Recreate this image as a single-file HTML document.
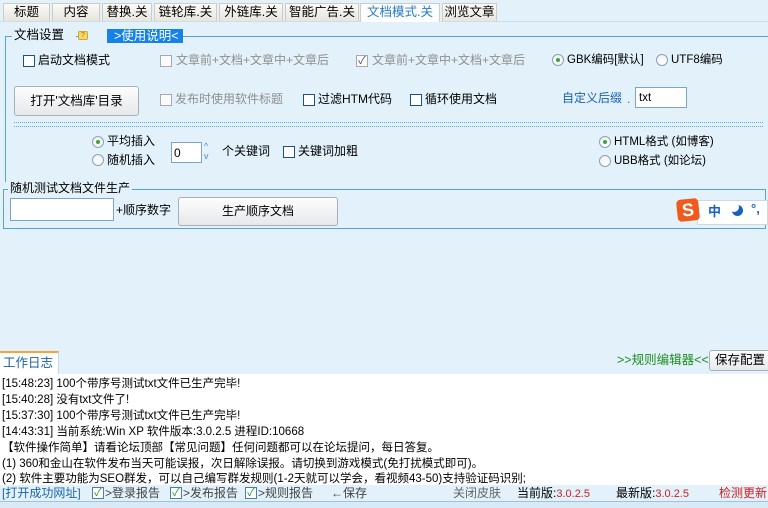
<!DOCTYPE html>
<html><head><meta charset="utf-8"><style>
*{margin:0;padding:0;box-sizing:border-box}
body{width:768px;height:508px;overflow:hidden;background:#e2f1fa;font-family:"Liberation Sans","Noto Sans CJK SC",sans-serif;font-size:12px;color:#000;position:relative}
.a{position:absolute;white-space:nowrap;line-height:14px}
.tab{position:absolute;top:3px;height:18px;background:linear-gradient(#fafaf7,#e7e5dd);border:1px solid #cfcdc3;border-bottom:none;text-align:center;line-height:17px;font-size:12.5px}
.cb{position:absolute;width:12px;height:12px;border:1px solid #1c5180;background:#fff}
.cb.g{border-color:#a9a9a9;background:#fafafa}
.rd{position:absolute;width:12px;height:12px;border:1px solid #8aa0b8;border-radius:50%;background:linear-gradient(#f2f2f2,#fff)}
.rd.on::after{content:"";position:absolute;left:3px;top:3px;width:4px;height:4px;border-radius:50%;background:#3aa537}
.btn{position:absolute;border:1px solid #a7b0b7;border-radius:3px;background:linear-gradient(#fdfdfd,#e6e8ea);text-align:center}
.gray{color:#8f8f8f}
.inp{position:absolute;background:#fff;border:1px solid #7aa4c8}
</style></head><body>
<div style="position:absolute;left:0;top:21px;width:768px;height:1px;background:#c9dfe9"></div>
<div class="tab" style="left:3px;width:47px">标题</div>
<div class="tab" style="left:52px;width:48px">内容</div>
<div class="tab" style="left:102px;width:50px">替换.关</div>
<div class="tab" style="left:154px;width:63px">链轮库.关</div>
<div class="tab" style="left:219px;width:64px">外链库.关</div>
<div class="tab" style="left:285px;width:74px">智能广告.关</div>
<div class="tab" style="left:360px;width:80px;background:#fcfdfe;color:#2b7bc0;height:19px">文档模式.关</div>
<div class="tab" style="left:442px;width:55px">浏览文章</div>

<div style="position:absolute;left:5px;top:36px;width:770px;height:146px;border:1px solid #5aa4c9;border-bottom:none"></div>
<div class="a" style="left:12px;top:28px;background:#e2f1fa;padding:0 2px;font-size:12.5px">文档设置</div>
<div class="a" style="left:64px;top:29px;width:12px;background:#e2f1fa;height:12px"></div>
<div style="position:absolute;left:78px;top:31px;width:10px;height:9px;background:#f6d96b;border:1px solid #d5a52c;border-radius:2px;font-size:7px;line-height:7px;text-align:center;color:#a06b00">?</div>
<div class="a" style="left:88px;top:29px;width:19px;height:12px;background:#e2f1fa"></div>
<div class="a" style="left:107px;top:29px;width:76px;height:14px;background:#1681e6;color:#fff;font-size:12.5px;line-height:14px;padding-left:7px">&gt;使用说明&lt;</div>

<div class="cb" style="left:23px;top:55px"></div><div class="a" style="left:38px;top:53px">启动文档模式</div>
<div class="cb g" style="left:160px;top:55px"></div><div class="a gray" style="left:176px;top:53px">文章前+文档+文章中+文章后</div>
<div class="cb g" style="left:356px;top:55px;color:#555;font-size:11px;line-height:10px;text-align:center">✓</div><div class="a gray" style="left:372px;top:53px">文章前+文章中+文档+文章后</div>
<div class="rd on" style="left:552px;top:54px"></div><div class="a" style="left:567px;top:53px;font-size:11.5px">GBK编码[默认]</div>
<div class="rd" style="left:656px;top:54px"></div><div class="a" style="left:671px;top:53px;font-size:11.5px">UTF8编码</div>

<div class="btn" style="left:14px;top:86px;width:125px;height:30px;line-height:28px;font-size:12.5px">打开'文档库'目录</div>
<div class="cb g" style="left:160px;top:94px"></div><div class="a gray" style="left:175px;top:92px">发布时使用软件标题</div>
<div class="cb" style="left:303px;top:94px"></div><div class="a" style="left:318px;top:92px">过滤HTM代码</div>
<div class="cb" style="left:410px;top:94px"></div><div class="a" style="left:425px;top:92px">循环使用文档</div>
<div class="a" style="left:562px;top:91px;color:#1a64b0">自定义后缀</div>
<div class="a" style="left:627px;top:92px;color:#666">.</div>
<div class="inp" style="left:635px;top:87px;width:52px;height:21px;padding:3px 0 0 3px;font-size:11.5px;line-height:14px">txt</div>

<div style="position:absolute;left:14px;top:122px;width:749px;border-top:1px dotted #5aaed3"></div>
<div style="position:absolute;left:14px;top:126px;width:749px;border-top:1px dotted #5aaed3"></div>

<div class="rd on" style="left:92px;top:136px"></div><div class="a" style="left:107px;top:134px">平均插入</div>
<div class="rd" style="left:92px;top:154px"></div><div class="a" style="left:107px;top:153px">随机插入</div>
<div class="inp" style="left:171px;top:142px;width:31px;height:21px;padding:3px 0 0 2px;line-height:14px">0</div>
<div class="a" style="left:204px;top:141px;color:#4a8fd0;font-size:9px;line-height:10px">^<br>v</div>
<div class="a" style="left:222px;top:144px">个关键词</div>
<div class="cb" style="left:283px;top:146px"></div><div class="a" style="left:298px;top:144px">关键词加粗</div>
<div class="rd on" style="left:599px;top:136px"></div><div class="a" style="left:614px;top:135px;font-size:11.5px">HTML格式 (如博客)</div>
<div class="rd" style="left:599px;top:155px"></div><div class="a" style="left:614px;top:154px;font-size:11.5px">UBB格式 (如论坛)</div>

<div style="position:absolute;left:3px;top:189px;width:763px;height:40px;border:1px solid #5aa4c9"></div>
<div class="a" style="left:8px;top:181px;background:#e2f1fa;padding:0 2px">随机测试文档文件生产</div>
<div class="inp" style="left:10px;top:198px;width:104px;height:23px"></div>
<div class="a" style="left:116px;top:203px">+顺序数字</div>
<div class="btn" style="left:178px;top:197px;width:160px;height:29px;line-height:27px">生产顺序文档</div>
<div style="position:absolute;left:697px;top:200px;width:71px;height:25px;background:#fff;border:1px solid #cfd9e1"></div>
<div style="position:absolute;left:677px;top:199px;width:22px;height:22px;background:#f05a1c;border-radius:4px;color:#fff;font-weight:bold;font-size:18px;line-height:22px;text-align:center;transform:rotate(-6deg)">S</div>
<div class="a" style="left:708px;top:204px;color:#1561c4;font-weight:bold;font-size:13px;line-height:16px">中</div>
<div style="position:absolute;left:732px;top:205px;width:11px;height:11px;border-radius:50%;background:#1561c4"></div>
<div style="position:absolute;left:729px;top:202px;width:10px;height:10px;border-radius:50%;background:#fff"></div>
<div class="a" style="left:751px;top:201px;color:#1561c4;font-weight:bold;font-size:13px;line-height:16px">°,</div>

<div style="position:absolute;left:0;top:351px;width:59px;height:24px;background:#fff;border-top:2px solid #f3a53b;border-right:1px solid #c7d9e5"></div>
<div class="a" style="left:3px;top:356px;color:#1a5fa8;font-size:12.5px">工作日志</div>
<div class="a" style="left:617px;top:353px;color:#1f8c1f;font-size:12.5px">&gt;&gt;规则编辑器&lt;&lt;</div>
<div class="btn" style="left:709px;top:350px;width:62px;height:21px;line-height:19px;font-size:12.5px">保存配置</div>
<div style="position:absolute;left:0;top:374px;width:768px;height:111px;background:#fff"></div>
<div class="a" style="left:2px;top:377px;line-height:15.9px;font-size:11.5px">[15:48:23] 100个带序号测试txt文件已生产完毕!<br>[15:40:28] 没有txt文件了!<br>[15:37:30] 100个带序号测试txt文件已生产完毕!<br>[14:43:31] 当前系统:Win XP 软件版本:3.0.2.5 进程ID:10668<br>【软件操作简单】请看论坛顶部【常见问题】任何问题都可以在论坛提问，每日答复。<br>(1) 360和金山在软件发布当天可能误报，次日解除误报。请切换到游戏模式(免打扰模式即可)。<br>(2) 软件主要功能为SEO群发，可以自己编写群发规则(1-2天就可以学会，看视频43-50)支持验证码识别;</div>
<div style="position:absolute;left:0;top:485px;width:768px;height:16px;background:#e2f1fa"></div>
<div class="a" style="left:2px;top:486px;color:#1a64b0">[打开成功网址]</div>
<div class="cb" style="left:92px;top:487px;border-color:#4a7fa8;color:#2a9a2a;font-size:11px;line-height:10px;text-align:center">✓</div><div class="a" style="left:105px;top:486px;color:#444">&gt;登录报告</div>
<div class="cb" style="left:170px;top:487px;border-color:#4a7fa8;color:#2a9a2a;font-size:11px;line-height:10px;text-align:center">✓</div><div class="a" style="left:183px;top:486px;color:#444">&gt;发布报告</div>
<div class="cb" style="left:245px;top:487px;border-color:#4a7fa8;color:#2a9a2a;font-size:11px;line-height:10px;text-align:center">✓</div><div class="a" style="left:258px;top:486px;color:#444">&gt;规则报告</div>
<div class="a" style="left:331px;top:486px;color:#444">←保存</div>
<div class="a" style="left:453px;top:486px;color:#666">关闭皮肤</div>
<div class="a" style="left:517px;top:486px">当前版:<span style="color:#d02020;font-size:11px">3.0.2.5</span></div>
<div class="a" style="left:616px;top:486px">最新版:<span style="color:#d02020;font-size:11px">3.0.2.5</span></div>
<div class="a" style="left:719px;top:486px;color:#d02020">检测更新</div>
<div style="position:absolute;left:0;top:501px;width:768px;height:7px;background:#d8eaf5;border-top:1px solid #9cc4dc"></div>
</body></html>
